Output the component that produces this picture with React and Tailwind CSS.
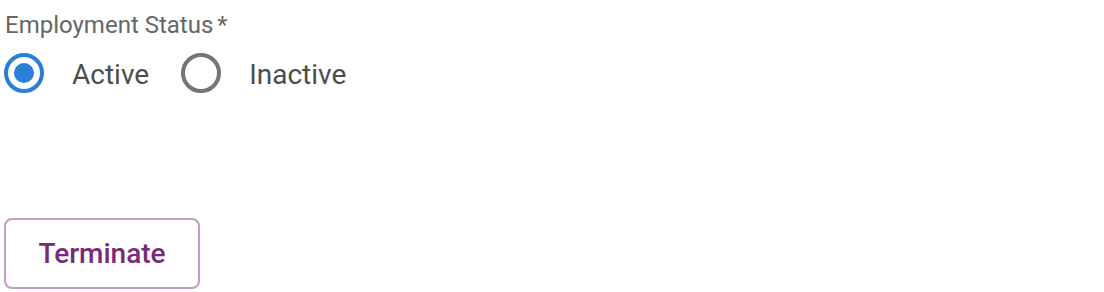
import React from "react";

function RadioIcon({ checked }) {
  const color = checked ? "#2a7fd8" : "#757575";
  return (
    <span className="flex h-12 w-12 shrink-0 items-center justify-center">
      <svg width="48" height="48" viewBox="0 0 48 48">
        <circle cx="24" cy="24" r="18" fill="none" stroke={color} strokeWidth="4" />
        {checked && <circle cx="24" cy="24" r="10" fill={color} />}
      </svg>
    </span>
  );
}

export default function App() {
  return (
    <div className="bg-white w-[1104px] h-[292px]" style={{ fontFamily: "Roboto, 'Liberation Sans', sans-serif" }}>
      <div className="pt-[11px] pl-[5px] text-[24px] leading-[28px] text-[#666666]">
        Employment Status<span className="ml-[4px]">*</span>
      </div>
      <div className="mt-[10px] flex items-center">
        <label className="flex items-center mr-[28px]">
          <RadioIcon checked />
          <span className="ml-[24px] pt-[4px] text-[28px] leading-[32px] text-[#4d4d4d]">Active</span>
        </label>
        <label className="flex items-center">
          <RadioIcon />
          <span className="ml-[24px] pt-[4px] text-[28px] leading-[32px] text-[#4d4d4d]">Inactive</span>
        </label>
      </div>
      <div className="mt-[121px] pl-[4px]">
        <button className="h-[71px] w-[196px] rounded-[8px] border-2 border-[#c49cc4] text-[28px] font-medium text-[#7a2a7a]">
          Terminate
        </button>
      </div>
    </div>
  );
}
